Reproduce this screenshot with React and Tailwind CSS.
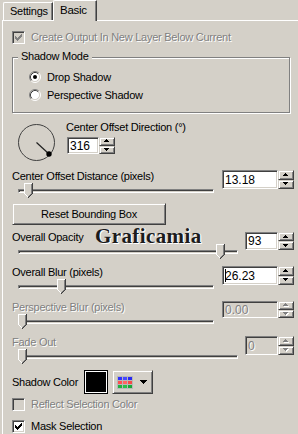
import React from "react";

const SUNKEN =
  "border border-t-[#808080] border-l-[#808080] border-b-white border-r-white shadow-[inset_1px_1px_0_#404040,inset_-1px_-1px_0_#d4d0c8]";
const RAISED =
  "border border-t-[#d4d0c8] border-l-[#d4d0c8] border-b-[#404040] border-r-[#404040] shadow-[inset_1px_1px_0_#fff,inset_-1px_-1px_0_#808080]";
const DIS = "text-[#808080] [text-shadow:1px_1px_0_#fff]";

function Arrow({ up, disabled }) {
  const rows = up
    ? [[2, 0, 1], [1, 1, 3], [0, 2, 5]]
    : [[0, 0, 5], [1, 1, 3], [2, 2, 1]];
  return (
    <svg width="6" height="4" shapeRendering="crispEdges" className="block">
      {disabled &&
        rows.map(([x, y, w]) => (
          <rect key={"w" + y} x={x + 1} y={y + 1} width={w} height="1" fill="#fff" />
        ))}
      {rows.map(([x, y, w]) => (
        <rect key={y} x={x} y={y} width={w} height="1" fill={disabled ? "#808080" : "#000"} />
      ))}
    </svg>
  );
}

function SpinButtons({ disabled }) {
  return (
    <div className="flex flex-col w-[16px] h-full">
      <div className={`flex-1 ${RAISED} bg-[#d4d0c8] flex items-center justify-center`}>
        <Arrow up disabled={disabled} />
      </div>
      <div className={`flex-1 ${RAISED} bg-[#d4d0c8] flex items-center justify-center`}>
        <Arrow disabled={disabled} />
      </div>
    </div>
  );
}

function Spin({ value, cls, editCls, disabled, caret }) {
  return (
    <div className={`flex flex-none ${cls}`}>
      <div
        className={`${editCls} h-full ${SUNKEN} ${
          disabled ? "bg-[#d4d0c8] " + DIS : "bg-white text-black"
        } flex items-center pl-[2px] text-[12px] tracking-normal`}
      >
        {caret && <span className="w-[1px] h-[13px] bg-black mr-[-1px]" />}
        <span>{value}</span>
      </div>
      <SpinButtons disabled={disabled} />
    </div>
  );
}

function Thumb() {
  const px = [];
  px.push([0, 0, 9, 11, "#d4d0c8"]);
  px.push([1, 11, 7, 1, "#d4d0c8"]);
  px.push([2, 12, 5, 1, "#d4d0c8"]);
  px.push([3, 13, 3, 1, "#d4d0c8"]);
  px.push([0, 0, 8, 1, "#fff"]);
  px.push([0, 0, 1, 11, "#fff"]);
  px.push([1, 11, 1, 1, "#fff"]);
  px.push([2, 12, 1, 1, "#fff"]);
  px.push([3, 13, 1, 1, "#fff"]);
  px.push([7, 1, 1, 10, "#808080"]);
  px.push([6, 11, 1, 1, "#808080"]);
  px.push([5, 12, 1, 1, "#808080"]);
  px.push([4, 13, 1, 1, "#808080"]);
  px.push([8, 0, 1, 11, "#404040"]);
  px.push([7, 11, 1, 1, "#404040"]);
  px.push([6, 12, 1, 1, "#404040"]);
  px.push([5, 13, 1, 1, "#404040"]);
  px.push([4, 14, 1, 1, "#404040"]);
  return (
    <svg width="9" height="15" shapeRendering="crispEdges" className="block">
      {px.map(([x, y, w, h, c], i) => (
        <rect key={i} x={x} y={y} width={w} height={h} fill={c} />
      ))}
    </svg>
  );
}

function Slider({ cls, thumbCls }) {
  return (
    <div className={`relative ml-[6px] h-[16px] pt-[6px] ${cls}`}>
      <div className={`h-[4px] bg-[#d4d0c8] ${SUNKEN}`} />
      <div className={`absolute top-0 ${thumbCls}`}>
        <Thumb />
      </div>
    </div>
  );
}

function Check({ color }) {
  const rows = [
    [6, 0, 1], [5, 1, 2], [0, 2, 1], [4, 2, 3], [0, 3, 2], [3, 3, 3], [0, 4, 5], [1, 5, 3], [2, 6, 1],
  ];
  return (
    <svg width="7" height="7" shapeRendering="crispEdges" className="block">
      {rows.map(([x, y, w], i) => (
        <rect key={i} x={x} y={y} width={w} height="1" fill={color} />
      ))}
    </svg>
  );
}

function Checkbox({ label, checked, disabled, cls }) {
  return (
    <div className={`flex items-center gap-[6px] h-[13px] flex-none ${cls || ""}`}>
      <div
        className={`w-[13px] h-[13px] flex-none ${SUNKEN} ${
          disabled ? "bg-[#d4d0c8]" : "bg-white"
        } flex items-center justify-center`}
      >
        {checked && <Check color={disabled ? "#808080" : "#000"} />}
      </div>
      <span className={`leading-[13px] whitespace-nowrap ${disabled ? DIS : ""}`}>{label}</span>
    </div>
  );
}

function Radio({ label, checked, cls }) {
  return (
    <div className={`flex items-center gap-[6px] h-[12px] ${cls || ""}`}>
      <svg width="12" height="12" className="block flex-none">
        <circle cx="6" cy="6" r="4.5" fill="#fff" />
        <path d="M2.11 9.89 A5.5 5.5 0 0 1 9.89 2.11" stroke="#808080" fill="none" />
        <path d="M9.89 2.11 A5.5 5.5 0 0 1 2.11 9.89" stroke="#fff" fill="none" />
        <path d="M2.82 9.18 A4.5 4.5 0 0 1 9.18 2.82" stroke="#404040" fill="none" />
        <path d="M9.18 2.82 A4.5 4.5 0 0 1 2.82 9.18" stroke="#d4d0c8" fill="none" />
        {checked && <circle cx="6" cy="6" r="2" fill="#000" />}
      </svg>
      <span className="leading-[13px] whitespace-nowrap">{label}</span>
    </div>
  );
}

function PaletteIcon() {
  const rows = [
    ["#3030ff", "#4848ff", "#2828f0"],
    ["#ff5050", "#ff6464", "#f84848"],
    ["#20b040", "#28c048", "#18a838"],
  ];
  return (
    <svg width="16" height="13" shapeRendering="crispEdges" className="block">
      <rect x="0" y="0" width="16" height="13" fill="#b8b8b8" />
      {rows.map((r, yi) =>
        r.map((c, xi) => (
          <rect key={yi + "-" + xi} x={1 + xi * 5} y={1 + yi * 4} width="4" height="3" fill={c} />
        ))
      )}
    </svg>
  );
}

function DropArrow() {
  const rows = [[0, 0, 7], [1, 1, 5], [2, 2, 3], [3, 3, 1]];
  return (
    <svg width="7" height="4" shapeRendering="crispEdges" className="block">
      {rows.map(([x, y, w]) => (
        <rect key={y} x={x} y={y} width={w} height="1" fill="#000" />
      ))}
    </svg>
  );
}

export default function App() {
  return (
    <div className="w-[298px] h-[434px] bg-[#d4d0c8] overflow-hidden font-['Liberation_Sans',Arial,sans-serif] text-[11px] text-black tracking-[-0.25px] select-none">
      {/* Tabs */}
      <div className="flex items-end h-[20px] pl-[3px]">
        <div className="h-[18px] w-[50px] border-t border-l border-r border-t-white border-l-white border-r-[#404040] shadow-[inset_-1px_0_0_#808080] rounded-tl-[2px] pl-[6px] leading-[17px]">
          Settings
        </div>
        <div className="relative z-10 h-[21px] w-[44px] mb-[-1px] bg-[#d4d0c8] border-t border-l border-r border-t-white border-l-white border-r-[#404040] shadow-[inset_-1px_0_0_#808080] rounded-tl-[2px] pl-[6px] leading-[18px] text-[11.5px]">
          Basic
        </div>
      </div>

      {/* Panel */}
      <div className="ml-[2px] h-[414px] border-t border-l border-t-white border-l-white pl-[9px] pr-[4px] flex flex-col">
        <Checkbox
          cls="mt-[10px]"
          checked
          disabled
          label="Create Output In New Layer Below Current"
        />

        {/* Group box */}
        <div className="relative mt-[13px] w-[278px] h-[56px] flex-none border border-[#808080] shadow-[inset_1px_1px_0_#fff,1px_1px_0_#fff] pl-[16px] pt-[13px]">
          <span className="absolute left-[5px] top-[-8px] px-[3px] bg-[#d4d0c8] leading-[13px]">
            Shadow Mode
          </span>
          <Radio checked label="Drop Shadow" />
          <Radio cls="mt-[6px]" label="Perspective Shadow" />
        </div>

        {/* Dial row */}
        <div className="mt-[8px] flex h-[40px] flex-none">
          <svg width="40" height="40" className="ml-[4px] block flex-none">
            <circle cx="20.5" cy="21.5" r="18" fill="none" stroke="#404040" strokeWidth="1" />
            <line x1="20.5" y1="21.5" x2="33" y2="33" stroke="#202020" strokeWidth="1.2" />
            <circle cx="33" cy="33" r="2.7" fill="#000" />
          </svg>
          <div className="ml-[10px]">
            <div className="leading-[13px] h-[13px] whitespace-nowrap">Center Offset Direction (°)</div>
            <Spin cls="mt-[3px] ml-[1px] h-[17px]" editCls="w-[32px]" value="316" />
          </div>
        </div>

        {/* Center offset distance */}
        <div className="mt-[9px] flex justify-between items-start flex-none">
          <div>
            <div className="leading-[13px] h-[13px] whitespace-nowrap">Center Offset Distance (pixels)</div>
            <Slider cls="w-[196px]" thumbCls="left-[6px]" />
          </div>
          <Spin cls="h-[19px]" editCls="w-[56px]" value="13.18" />
        </div>

        {/* Button */}
        <div
          className={`mt-[4px] w-[154px] h-[22px] flex-none ${RAISED} flex items-center justify-center leading-[13px]`}
        >
          Reset Bounding Box
        </div>

        {/* Overall Opacity */}
        <div className="relative mt-[6px] flex justify-between items-start flex-none">
          <div>
            <div className="leading-[13px] h-[13px] whitespace-nowrap">Overall Opacity</div>
            <Slider cls="w-[220px]" thumbCls="left-[198px]" />
          </div>
          <Spin cls="mt-[1px] h-[18px]" editCls="w-[33px]" value="93" />
          <span className="absolute left-[83px] top-[-5px] font-['Liberation_Serif',serif] font-bold text-[21px] leading-[21px] tracking-[0.4px] text-[#1c1c1c] [text-shadow:1px_1px_0_#fff,1px_0_0_#fff]">
            Graficamia
          </span>
        </div>

        {/* Overall Blur */}
        <div className="mt-[6px] flex justify-between items-start flex-none">
          <div>
            <div className="leading-[13px] h-[13px] whitespace-nowrap">Overall Blur (pixels)</div>
            <Slider cls="w-[196px]" thumbCls="left-[39px]" />
          </div>
          <Spin cls="h-[19px]" editCls="w-[56px]" value="26.23" caret />
        </div>

        {/* Perspective Blur */}
        <div className="mt-[6px] flex justify-between items-start flex-none">
          <div>
            <div className={`leading-[13px] h-[13px] whitespace-nowrap ${DIS}`}>Perspective Blur (pixels)</div>
            <Slider cls="w-[196px]" thumbCls="left-0" />
          </div>
          <Spin cls="h-[17px]" editCls="w-[56px]" value="0.00" disabled />
        </div>

        {/* Fade Out */}
        <div className="mt-[6px] flex justify-between items-start flex-none">
          <div>
            <div className={`leading-[13px] h-[13px] whitespace-nowrap ${DIS}`}>Fade Out</div>
            <Slider cls="w-[220px]" thumbCls="left-0" />
          </div>
          <Spin cls="h-[19px]" editCls="w-[33px]" value="0" disabled />
        </div>

        {/* Shadow Color */}
        <div className="mt-[5px] flex items-center h-[24px] flex-none">
          <span className="w-[72px] leading-[13px] whitespace-nowrap">Shadow Color</span>
          <div className="w-[24px] h-[24px] bg-black border border-black shadow-[inset_0_0_0_1px_#fff,inset_0_0_0_2px_#000]" />
          <div className={`ml-[4px] w-[41px] h-[24px] ${RAISED} bg-[#d4d0c8] flex items-center pl-[4px]`}>
            <PaletteIcon />
            <div className="ml-[7px]">
              <DropArrow />
            </div>
          </div>
        </div>

        <Checkbox cls="mt-[4px]" disabled label="Reflect Selection Color" />
        <Checkbox cls="mt-[9px]" checked label="Mask Selection" />
      </div>
    </div>
  );
}
